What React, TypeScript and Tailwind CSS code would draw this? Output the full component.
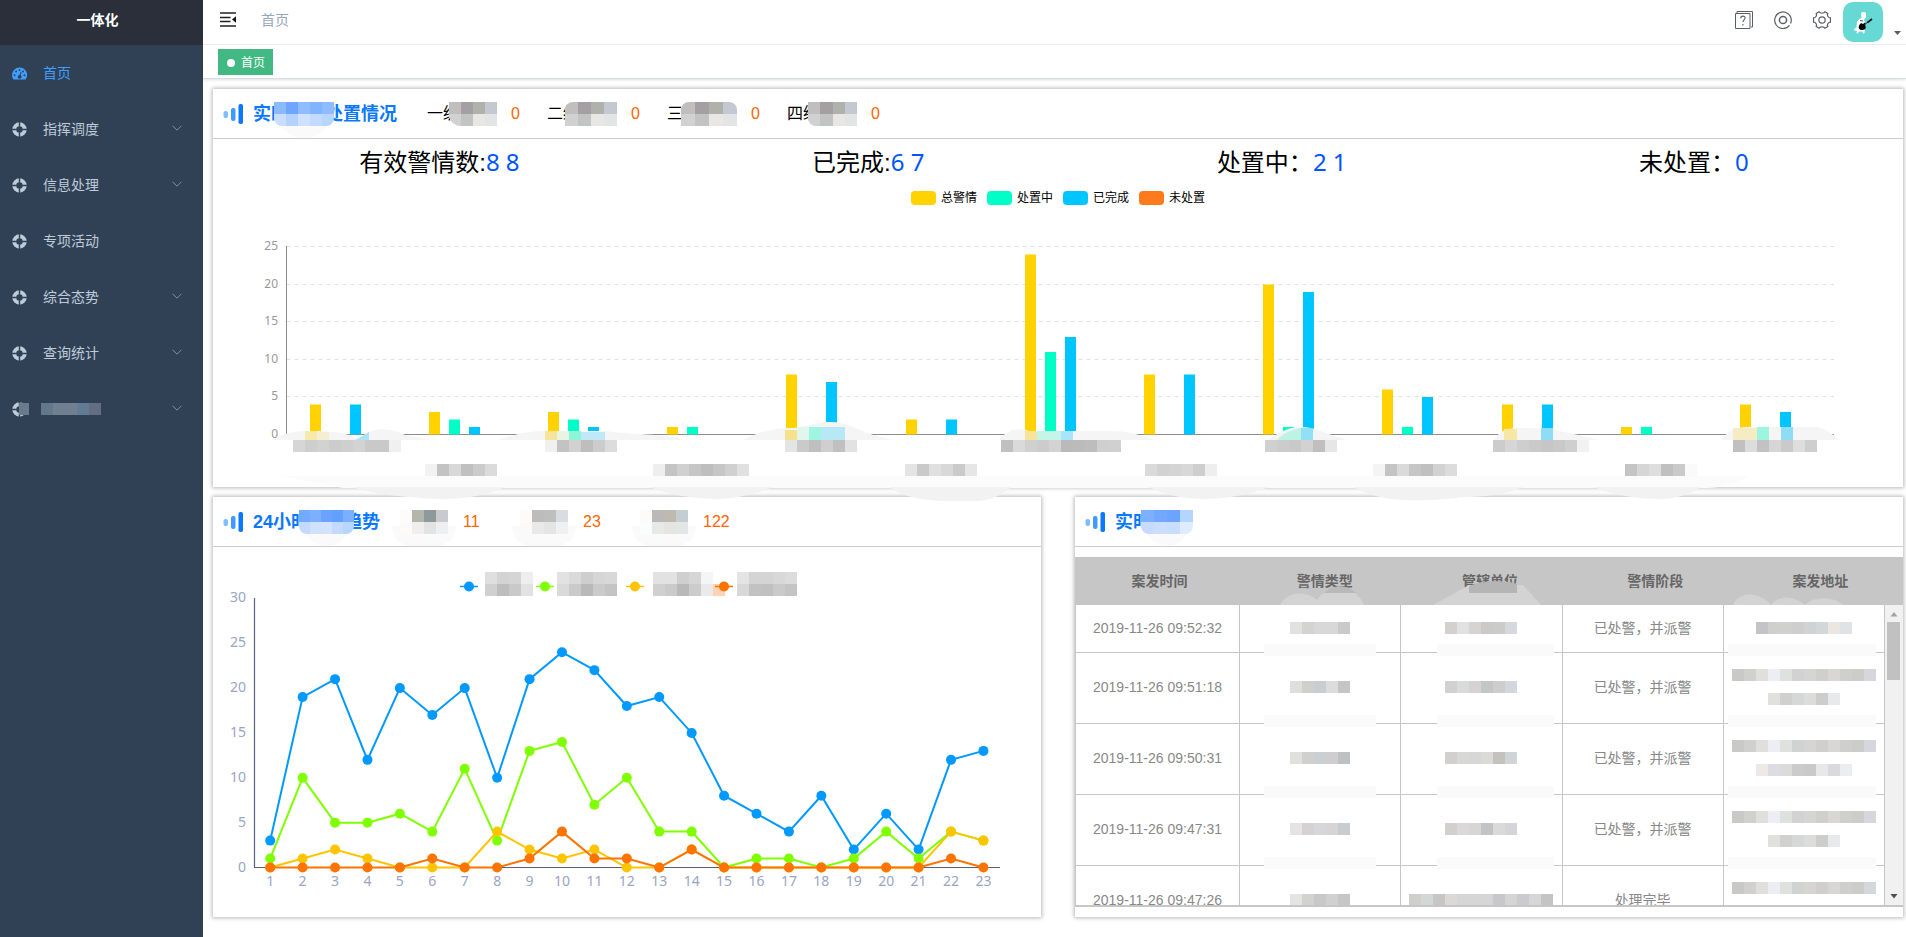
import clsx from 'clsx';

interface MenuItem {
  label?: string;
  icon: 'dashboard' | 'ring';
  active?: boolean;
  expandable?: boolean;
}

interface IncidentRow {
  time: string;
  stage: string;
  type: string[][];
  unit: string[][];
  address: string[][][];
}

const menu: MenuItem[] = [
  { label: '首页', icon: 'dashboard', active: true },
  { label: '指挥调度', icon: 'ring', expandable: true },
  { label: '信息处理', icon: 'ring', expandable: true },
  { label: '专项活动', icon: 'ring' },
  { label: '综合态势', icon: 'ring', expandable: true },
  { label: '查询统计', icon: 'ring', expandable: true },
  { icon: 'ring', expandable: true },
];

const greyMask = [
  ['#c0bfbe', '#a39fa3', '#b0b1ab', '#c3c8d1'],
  ['#d0d1d0', '#c2c4c3', '#e8e7e6', '#e3e5e5'],
];

const levels = [
  { label: '一级', value: 0, mask: '-ml-[10px] rounded-bl-xl' },
  { label: '二级', value: 0, mask: '-ml-[14px] rounded-tl-lg' },
  { label: '三级', value: 0, mask: '-ml-[18px] rounded-t-lg' },
  { label: '四级', value: 0, mask: '-ml-[11px] rounded-bl-lg' },
];

const totals = [
  { label: '有效警情数:', value: '8 8' },
  { label: '已完成:', value: '6 7' },
  { label: '处置中：', value: '2 1' },
  { label: '未处置：', value: '0' },
];

const barLegend = [
  { label: '总警情', color: 'bg-[#ffd200]' },
  { label: '处置中', color: 'bg-[#00ffc6]' },
  { label: '已完成', color: 'bg-[#00c6ff]' },
  { label: '未处置', color: 'bg-[#ff7a1a]' },
];

// [total, in progress, done]
const barData = [
  [4, 0, 4],
  [3, 2, 1],
  [3, 2, 1],
  [1, 1, 0],
  [8, 1, 7],
  [2, 0, 2],
  [24, 11, 13],
  [8, 0, 8],
  [20, 1, 19],
  [6, 1, 5],
  [4, 0, 4],
  [1, 1, 0],
  [4, 1, 3],
];
const barColors = ['#ffd200', '#00ffc6', '#00c6ff'];

const barLabels = [
  { x: 80, y: 230, cells: ['#d6d6d6', '#cecece', '#d2d2d2', '#cccccc', '#cfcfcf', '#d3d3d3', '#c9c9c9', '#c9c9c9', '#f0f0f0'] },
  { x: 332, y: 230, cells: ['#f0f0f0', '#c3c3c3', '#d1d1d1', '#bebebe', '#cccccc', '#dcdcdc'] },
  { x: 572, y: 230, cells: ['#e4e4e4', '#cacaca', '#bfbfbf', '#cfcfcf', '#c0c0c0', '#e2e2e2'] },
  { x: 788, y: 230, cells: ['#c0c0c0', '#dadada', '#d0d0d0', '#cccccc', '#d3d3d3', '#bababa', '#bbbbbb', '#bdbdbd', '#cfcfcf', '#d0d0d0'] },
  { x: 1052, y: 230, cells: ['#d0d0d0', '#cccccc', '#c9c9c9', '#d2d2d2', '#bfbfbf', '#e6e6e6'] },
  { x: 1280, y: 230, cells: ['#cccccc', '#d6d6d6', '#cecece', '#cacaca', '#c6c6c6', '#c9c9c9', '#cfcfcf', '#f2f2f2'] },
  { x: 1520, y: 230, cells: ['#c0c0c0', '#dcdcdc', '#c2c2c2', '#d6d6d6', '#cacaca', '#dedede', '#cecece'] },
  { x: 212, y: 254, cells: ['#f2f2f2', '#c3c3c3', '#d8d8d8', '#c0c0c0', '#cbcbcb', '#dbdbdb'] },
  { x: 440, y: 254, cells: ['#eeeeee', '#c4c4c4', '#d0d0d0', '#c6c6c6', '#bebebe', '#c6c6c6', '#d0d0d0', '#e0e0e0'] },
  { x: 692, y: 254, cells: ['#e4e4e4', '#cacaca', '#e0e0e0', '#d8d8d8', '#cacaca', '#e6e6e6'] },
  { x: 932, y: 254, cells: ['#dadada', '#d2d2d2', '#d4d4d4', '#d8d8d8', '#cecece', '#eeeeee'] },
  { x: 1160, y: 254, cells: ['#f4f4f4', '#c4c4c4', '#dadada', '#c6c6c6', '#c0c0c0', '#d2d2d2', '#dcdcdc'] },
  { x: 1412, y: 254, cells: ['#c4c4c4', '#d6d6d6', '#dedede', '#c0c0c0', '#cacaca', '#fafafa'] },
];

const lineSeries = [
  { color: '#0099ff', values: [3, 19, 21, 12, 20, 17, 20, 10, 21, 24, 22, 18, 19, 15, 8, 6, 4, 8, 2, 6, 2, 12, 13] },
  { color: '#80ff00', values: [1, 10, 5, 5, 6, 4, 11, 3, 13, 14, 7, 10, 4, 4, 0, 1, 1, 0, 1, 4, 1, 4, 3] },
  { color: '#ffc400', values: [0, 1, 2, 1, 0, 0, 0, 4, 2, 1, 2, 0, 0, 2, 0, 0, 0, 0, 0, 0, 0, 4, 3] },
  { color: '#ff7300', values: [0, 0, 0, 0, 0, 1, 0, 0, 1, 4, 1, 1, 0, 2, 0, 0, 0, 0, 0, 0, 0, 1, 0] },
];

const lineLegend = [
  {
    x: 256,
    maskX: 272,
    rows: [
      ['#dfdfdf', '#d3d3d3', '#d5d5d5', '#eeeeee'],
      ['#d0d0d0', '#bdbdbd', '#c9c9c9', '#e2e2e2'],
    ],
  },
  {
    x: 332,
    maskX: 344,
    rows: [
      ['#e2e2e2', '#dadada', '#cecece', '#d6d6d6', '#d8d8d8'],
      ['#dadada', '#cacaca', '#b9b9b9', '#cacaca', '#c4c4c4'],
    ],
  },
  {
    x: 422,
    maskX: 440,
    rows: [
      ['#e2e2e2', '#e2e2e2', '#cfcfcf', '#d6d6d6', '#f5f5f5'],
      ['#d0d0d0', '#cacaca', '#b9b9b9', '#cccccc', '#eaeaea', '#ffd3b3'],
    ],
  },
  {
    x: 511,
    maskX: 524,
    rows: [
      ['#e4e4e4', '#d4d4d4', '#d4d4d4', '#d8d8d8', '#dcdcdc'],
      ['#d8d8d8', '#c2c2c2', '#c0c0c0', '#cacaca', '#c4c4c4'],
    ],
  },
];

const trendStats = [
  { value: 11, rows: [['#fdfcfa', '#b2b6ab', '#8e9999', '#c8cad0'], ['#fcfbfa', '#f1eeee', '#e2e4e3', '#eeeff1']] },
  { value: 23, rows: [['#fdfbf8', '#bcbcba', '#bebebf', '#dbdce1'], ['#fcfaf9', '#e9e9e9', '#e4e4e4', '#eff0f2']] },
  { value: 122, rows: [['#fbfbfa', '#bab8b8', '#bfbab1', '#c4cdd1'], ['#fbfcfc', '#e7e9e9', '#e5e4e0', '#e2e6e6']] },
];

const columns = ['案发时间', '警情类型', '管辖单位', '警情阶段', '案发地址'];

const shortAddress = [['#e0e0de', '#d0d0ce', '#d4d8d7', '#dcdcda', '#cdcdcc', '#e8e9ea']];
const longAddress = [['#c9c9c8', '#d0d0cf', '#e0dfde', '#eceef4', '#dfe1df', '#d0d3d1', '#d6d5d3', '#cfcfce', '#d9d7d6', '#cfcfce', '#cccccb', '#d6d7dc']];

const incidents: IncidentRow[] = [
  {
    time: '2019-11-26 09:52:32',
    stage: '已处警，并派警',
    type: [['#e1e1e0', '#d3d3d0', '#d8d8d9', '#dad7d7', '#cacaca']],
    unit: [['#d2d1d0', '#e0e1e1', '#d5d4d3', '#cccac9', '#cbcbca', '#d6d8dd']],
    address: [[['#c3c4c7', '#cfcfce', '#d0d0ce', '#cdcecd', '#d0d3d3', '#d4d7d7', '#ebe6e2', '#dfe3e6']]],
  },
  {
    time: '2019-11-26 09:51:18',
    stage: '已处警，并派警',
    type: [['#dededd', '#cfcfce', '#cbcccf', '#dcdcdc', '#c5c5c6']],
    unit: [['#d0d1d0', '#d7dbdb', '#d5d2d1', '#c4c6c5', '#cfcdcc', '#d3d6dc']],
    address: [longAddress, shortAddress],
  },
  {
    time: '2019-11-26 09:50:31',
    stage: '已处警，并派警',
    type: [['#e0e0df', '#d0d0ce', '#cccfd2', '#cfcdcd', '#bfc0c2']],
    unit: [['#d1d0cf', '#d8d8d7', '#d7d7d7', '#dadad9', '#c5c2be', '#d0d4d7']],
    address: [longAddress, [['#eee9e7', '#dcdce2', '#dbdbdb', '#cbcbcb', '#c9c9c9', '#e7e8ea', '#dbd9db', '#ecedf0']]],
  },
  {
    time: '2019-11-26 09:47:31',
    stage: '已处警，并派警',
    type: [['#e5e4e3', '#d6d2d4', '#d6d7d9', '#d6d4d4', '#c9cccf']],
    unit: [['#d1d0cf', '#dad8d8', '#d8d5d5', '#c2c3c5', '#dcdad9', '#d5d5d9']],
    address: [longAddress, shortAddress],
  },
  {
    time: '2019-11-26 09:47:26',
    stage: '处理完毕',
    type: [['#e4e4e3', '#d2d2d1', '#c8c8c8', '#cfd1d0', '#c6c6c6']],
    unit: [['#cfcfcd', '#d3d7d6', '#c6c6c6', '#dbd8d6', '#d6d6d6', '#d6d6d5', '#d6d4d4', '#c6c8cb', '#d6d4d4', '#c9cbce', '#d6d6d6', '#c4c4c4']],
    address: [longAddress, shortAddress],
  },
];

// Pixelated block that stands over redacted text
function Mosaic({ rows, className }: { rows: string[][]; className?: string }) {
  const cols = Math.max(...rows.map((r) => r.length));
  return (
    <svg
      className={className}
      viewBox={`0 0 ${cols * 12} ${rows.length * 12}`}
      preserveAspectRatio="none"
      shapeRendering="crispEdges"
      aria-hidden="true"
    >
      {rows.map((row, r) =>
        row.map((fill, c) => <rect key={`${r}-${c}`} x={c * 12} y={r * 12} width="12" height="12" fill={fill} />)
      )}
    </svg>
  );
}

function MaskedTitle({ rows, className }: { rows: string[][]; className: string }) {
  return (
    <span className={clsx('relative block h-6 shrink-0', className)}>
      <span className="absolute inset-x-1 top-3 h-6 rounded-b-full bg-[#fafafa]" />
      <Mosaic rows={rows} className="relative h-6 w-full rounded-b-lg" />
    </span>
  );
}

function BarsIcon() {
  return (
    <svg className="h-5 w-5 shrink-0" viewBox="0 0 20 20" aria-hidden="true">
      <rect x="0.500" y="7" width="4.500" height="7" rx="2" fill="#7fbbff" />
      <rect x="8" y="4" width="4.500" height="13" rx="2" fill="#409aff" />
      <rect x="15.500" y="0" width="4.500" height="20" rx="1.800" fill="#0a78ff" />
    </svg>
  );
}

function RingIcon() {
  return (
    <svg className="h-[15px] w-[15px]" viewBox="0 0 16 16" aria-hidden="true">
      <circle cx="8" cy="8" r="5.600" fill="none" stroke="currentColor" strokeWidth="4.200" />
      <path d="M8 0v5M8 11v5M0 8h5M11 8h5" stroke="#304156" strokeWidth="1.500" />
    </svg>
  );
}

function DashboardIcon() {
  return (
    <svg className="h-[15px] w-[15px]" viewBox="0 0 16 16" aria-hidden="true">
      <path d="M8 1.600a8 8 0 0 0-8 8c0 1.600.4 3 1.200 4.300.1.300.4.400.7.400h12.200c.3 0 .6-.1.700-.4A8 8 0 0 0 8 1.600z" fill="currentColor" />
      <g fill="#304156">
        <circle cx="2.700" cy="9.800" r="1" />
        <circle cx="4.400" cy="5.900" r="1" />
        <circle cx="8" cy="4.200" r="1" />
        <circle cx="11.700" cy="5.900" r="1" />
        <circle cx="13.300" cy="9.800" r="1" />
        <path d="M9.300 6.200l.9.300-1 3.400a2 2 0 1 1-1.100-.3z" />
      </g>
    </svg>
  );
}

function Sidebar() {
  return (
    <aside className="w-[203px] shrink-0 bg-[#304156]">
      <h1 className="flex h-[45px] items-center justify-center bg-[#2b2f3a] pr-2 pb-1.5 text-sm font-bold text-white">一体化</h1>
      <nav>
        {menu.map((item, i) => (
          <a
            key={i}
            href="#"
            aria-label={item.label ?? '菜单'}
            className={clsx(
              'flex h-14 items-center pr-[21px] pl-3 text-sm',
              item.active ? 'text-[#409eff]' : 'text-[#bfcbd9]'
            )}
          >
            {item.icon === 'dashboard' ? <DashboardIcon /> : <RingIcon />}
            {item.label ? (
              <span className="ml-4">{item.label}</span>
            ) : (
              <>
                <Mosaic rows={[['#6b7b8e']]} className="-ml-2 h-3 w-2.5" />
                <Mosaic rows={[['#64788c', '#708090', '#727f92', '#647c93', '#636e83']]} className="ml-3 h-3 w-[60px]" />
              </>
            )}
            {item.expandable && (
              <svg className="mb-[3px] ml-auto h-1.5 w-2.5" viewBox="0 0 10 6" fill="none" stroke="#8290a1" aria-hidden="true">
                <path d="M.5.7L5 5.200 9.500.7" />
              </svg>
            )}
          </a>
        ))}
      </nav>
    </aside>
  );
}

function Navbar() {
  return (
    <header className="flex h-[45px] items-center border-b border-[#f0f1f2] pr-[5px] pl-[17px]">
      <button type="button" aria-label="收起菜单" className="mb-[7px]">
        <svg className="h-4 w-4" viewBox="0 0 16 16" aria-hidden="true">
          <path d="M0 2h16M0 6.500h10.500M0 10.500h10.500M0 15h16" stroke="#222" strokeWidth="1.500" />
          <path d="M16 5.300v6.400L12 8.500z" fill="#111" />
        </svg>
      </button>
      <a href="#" className="mb-1 ml-[25px] text-sm text-[#97a8be]">首页</a>
      <div className="ml-auto flex items-center">
        <div className="mb-1 flex gap-[21px] text-[#5a5e66]">
          <button type="button" aria-label="帮助">
            <svg className="h-[18px] w-[18px]" viewBox="0 0 18 18" fill="none" stroke="currentColor" aria-hidden="true">
              <path d="M.5 2.500h14.500v15H.5zM2 .5h15.500V16H16M2 .5v2" />
              <path d="M5.700 7.300c0-3 4.400-2.800 4.400-.2 0 1.800-2.200 1.900-2.200 4M7.900 13v1.500" strokeWidth="1.100" />
            </svg>
          </button>
          <button type="button" aria-label="主题">
            <svg className="h-[18px] w-[18px]" viewBox="0 0 18 18" fill="none" stroke="currentColor" strokeWidth="1.200" aria-hidden="true">
              <path d="M15.500 14.400A8.300 8.300 0 1 1 17.300 9c0 1.300-.3 2.500-.8 3.600M15.500 14.400a8.300 8.300 0 0 1-2.300 1.800" />
              <circle cx="9" cy="9" r="3.600" strokeWidth="1.500" />
            </svg>
          </button>
          <button type="button" aria-label="设置">
            <svg className="h-[18px] w-[18px]" viewBox="0 0 18 18" fill="none" stroke="currentColor" strokeWidth="1.200" aria-hidden="true">
              <path d="M6 .8C7 2.700 11 2.700 12 .8l2.800 1.600c-1 2 .6 4.600 2.700 4.500v4.200c-2.100-.1-3.700 2.500-2.700 4.500L12 17.200c-1-1.900-5-1.900-6 0l-2.800-1.600c1-2-.6-4.600-2.700-4.500V6.900c2.100.1 3.700-2.500 2.700-4.500z" />
              <circle cx="9" cy="9" r="3.200" />
            </svg>
          </button>
        </div>
        <button type="button" aria-label="用户菜单" className="ml-3 flex items-end">
          <svg className="h-10 w-10 rounded-[10px] bg-[#66d9d5]" viewBox="0 0 40 40" aria-hidden="true">
            <path d="M18 11c1-1.500 4-1.500 5 0v4.500l-2 2 1 3.500v6l-.5 4-1.500.5-.5-2h-4l-.5 2-1.500-.5.500-2-3-.5.500-2 2-1 .5-6 1.500-1.500 1.500-1.500 1.500-.5z" fill="#fff" />
            <path d="M18 21l2 1 2-1.500.5 4c1 2-1 3.500-3.500 3.500s-4-2-3-4c.3-1.500 1.500-2 2-3z" fill="#000" />
            <path d="M21 23l4-3" stroke="#123" strokeWidth="1" />
            <path d="M24.500 20.500L29 17" stroke="#111" strokeWidth="1.600" />
            <path d="M17 18.500l3 .5" stroke="#555" />
          </svg>
          <svg className="mb-[7px] ml-[11px] h-1 w-[7px]" viewBox="0 0 7 4" aria-hidden="true">
            <path d="M0 0h7L3.500 4z" fill="#5a5e66" />
          </svg>
        </button>
      </div>
    </header>
  );
}

function TagsBar() {
  return (
    <div className="flex h-[34px] items-center border-b border-[#d8dce5] pl-[15px] shadow-[0_1px_3px_0_rgba(0,0,0,0.12)]">
      <a href="#" className="flex h-[26px] items-center gap-1.5 bg-[#42b983] pt-0.5 pr-2 pl-[9px] text-xs text-white">
        <span className="h-2 w-2 rounded-full bg-white" />
        首页
      </a>
    </div>
  );
}

function BarChart() {
  const left = 73.5;
  const bottom = 224.5;
  const step = 119.2;
  const unit = 7.5;
  return (
    <svg className="block h-auto w-full overflow-visible" viewBox="0 0 1690 277" role="img" aria-label="警情处置柱状图">
      {[0, 5, 10, 15, 20, 25].map((tick) => (
        <g key={tick}>
          {tick > 0 && (
            <line
              x1={left}
              x2="1621"
              y1={Math.round(bottom - tick * unit) - 0.5}
              y2={Math.round(bottom - tick * unit) - 0.5}
              stroke="#e0e0e0"
              strokeDasharray="4 4"
            />
          )}
          <text x="65" y={bottom - tick * unit + 3} textAnchor="end" fontSize="12" fill="#999" className="font-['Noto_Sans',sans-serif]">
            {tick}
          </text>
        </g>
      ))}
      <path d={`M${left} 36V${bottom}H1621`} fill="none" stroke="#8c8c8c" />
      {barData.map((values, i) =>
        values.map((v, k) => (
          <rect
            key={`${i}-${k}`}
            x={Math.round(left + i * step + 23 + k * 20)}
            y={bottom - v * unit}
            width={v ? 11 : 0}
            height={v * unit}
            fill={barColors[k]}
          />
        ))
      )}

      {/* haze left around the blurred category names */}
      <g>
        <path d="M60 230C72 222 84 221 100 221s26 1 36 4l8 4 12-7c14-6 28-1 36 3l26 5z" fill="#f5f5f5" />
        <path d="M92 221h12v9H92z" fill="#f6e9ac" />
        <path d="M104 222h12v8h-12z" fill="#f5eed2" />
        <path d="M144 229l12-7v8h-14z" fill="#a9e3f6" />
        <path d="M284 230c20-6 30-9 50-9h60c20 4 60 2 78 9z" fill="#f5f5f5" />
        <path d="M332 221h12v9h-12z" fill="#f6e49a" />
        <path d="M344 221h12v9h-12z" fill="#e8f5e2" />
        <path d="M356 221h12v9h-12z" fill="#8ff5d8" />
        <path d="M368 222h24v8h-24z" fill="#bfe9f6" />
        <path d="M530 230c18-9 32-12 48-12s20-6 40-6 30 12 62 18z" fill="#f5f5f5" />
        <path d="M572 220h12v10h-12z" fill="#f6e28a" />
        <path d="M584 217h12v13h-12z" fill="#e0f6ee" />
        <path d="M596 217h12v13h-12z" fill="#9ff5e0" />
        <path d="M608 217h24v13h-24z" fill="#b8e7f6" />
        <path d="M786 230c8-10 18-13 30-9h84c20 0 30 6 44 9z" fill="#f5f5f5" />
        <path d="M812 221h12v9h-12z" fill="#f6e49a" />
        <path d="M824 221h24v9h-24z" fill="#c4f5e8" />
        <path d="M848 221h12v9h-12z" fill="#a9e5f8" />
        <path d="M1052 232c14-10 24-15 36-15 14 0 28 8 46 13z" fill="#f3f5f5" />
        <path d="M1064 230c6-6 12-10 24-12v12z" fill="#bdf3e4" />
        <path d="M1088 218h12v12h-12z" fill="#92e0f6" />
        <path d="M1280 232c6-12 14-14 30-14 22 0 36 2 76 12z" fill="#f5f5f5" />
        <path d="M1291 219h13v11h-13z" fill="#f5e8a6" />
        <path d="M1328 218h12v12h-12z" fill="#8fdcf6" />
        <path d="M1509 230c6-10 12-12 24-13h72c8 2 14 6 20 13z" fill="#f5f5f5" />
        <path d="M1520 218h24v12h-24z" fill="#f6ecc4" />
        <path d="M1544 217h12v13h-12z" fill="#9cf5e0" />
        <path d="M1568 217h12v13h-12z" fill="#8fdcf6" />
      </g>
      {barLabels.map((l) =>
        l.cells.map((fill, c) => (
          <rect key={`${l.x}-${c}`} x={l.x + c * 12} y={l.y} width="12" height="12" fill={fill} shapeRendering="crispEdges" />
        ))
      )}
      <path d="M68 266h1470c-20 8-30 12-44 12H130c-20-4-40-8-62-12z" fill="#fbfbfb" />
      <path
        d="M140 277h152c-16 8-40 12-60 12s-74-4-92-12zM436 277h124c-20 8-40 12-54 12-24 0-50-4-70-12zM676 277h122c-10 8-20 14-34 14-30 0-66 2-88-14zM936 277h120c-20 8-44 12-64 12-22 0-40-4-56-12zM1140 277h170c-20 8-40 10-60 10-30 4-80 8-110-10zM1380 277h108c-14 8-26 12-40 12-24 0-48-4-68-12z"
        fill="#f2f2f2"
      />
    </svg>
  );
}

function LineChart() {
  const x = (i: number) => 57.2 + i * 32.42;
  const y = (v: number) => 320.5 - v * 8.97;
  return (
    <svg className="block h-auto w-full" viewBox="0 0 828 370" role="img" aria-label="24小时趋势折线图">
      <path d="M41.5 51V320.5H787" fill="none" stroke="#57617b" strokeWidth="1.200" />
      {[0, 5, 10, 15, 20, 25, 30].map((tick) => (
        <text key={tick} x="33" y={y(tick) + 4} textAnchor="end" fontSize="14" fill="#9aa5c4" className="font-['Noto_Sans',sans-serif]">
          {tick}
        </text>
      ))}
      {lineSeries[0].values.map((_, i) => (
        <text key={i} x={x(i)} y="339" textAnchor="middle" fontSize="14" fill="#9aa5c4" className="font-['Noto_Sans',sans-serif]">
          {i + 1}
        </text>
      ))}
      {lineSeries.map((s) => (
        <g key={s.color} fill={s.color}>
          <polyline points={s.values.map((v, i) => `${x(i)},${y(v)}`).join(' ')} fill="none" stroke={s.color} strokeWidth="2" />
          {s.values.map((v, i) => (
            <circle key={i} cx={x(i)} cy={y(v)} r="5" />
          ))}
        </g>
      ))}
      {lineLegend.map((l, n) => (
        <g key={l.x}>
          <line x1={l.x - 9} x2={l.x + 9} y1="39.5" y2="39.5" stroke={lineSeries[n].color} strokeWidth="1.500" />
          <circle cx={l.x} cy="39.5" r="5" fill={lineSeries[n].color} />
          {l.rows.map((row, r) =>
            row.map((fill, c) => (
              <rect key={`${r}-${c}`} x={l.maskX + c * 12} y={25 + r * 12} width="12" height="12" fill={fill} shapeRendering="crispEdges" />
            ))
          )}
        </g>
      ))}
    </svg>
  );
}

function Haze({ className }: { className: string }) {
  return <span className={clsx('absolute -bottom-1 h-3 bg-[#fafafa]', className)} />;
}

function IncidentTable() {
  return (
    <div className="mt-2.5">
      <div className="relative bg-[#c6c6c6] pl-0.5">
        <table className="w-full table-fixed text-center text-sm text-[#666]">
          <thead>
            <tr className="h-12">
              {columns.map((c) => (
                <th key={c} scope="col" className="p-0 font-bold">{c}</th>
              ))}
            </tr>
          </thead>
        </table>
        <svg className="absolute inset-x-0 bottom-0 h-6 w-full" viewBox="0 0 828 24" preserveAspectRatio="none" aria-hidden="true">
          <path d="M205 24c6-12 24-16 37-5 8-14 38-18 47 5z" fill="#d3d3d3" />
          <path d="M249 12c10-10 24-8 32 0z" fill="#b9b9b9" />
          <path d="M358 24l36-20h54l18 20z" fill="#d3d3d3" />
          <path d="M394 12V5c12-6 38-6 48-2v9z" fill="#b5b5b5" />
          <path d="M658 24c6-14 26-14 38 0 8-10 22-10 34 0 10-10 30-8 38 0z" fill="#d3d3d3" />
        </svg>
      </div>
      <div className="flex h-[302px] overflow-hidden border-b-2 border-l border-[#c6c6c6]">
        <div className="min-w-0 flex-1 overflow-hidden">
          <table className="w-full table-fixed border-separate border-spacing-0 text-center text-sm text-[#888]">
            <colgroup>
              <col className="w-[164px]" />
              <col />
              <col />
              <col />
              <col />
            </colgroup>
            <tbody>
              {incidents.map((row, i) => (
                <tr
                  key={row.time}
                  className={clsx(
                    '[&>td]:border-r [&>td]:border-b [&>td]:border-[#c6c6c6] [&>td]:pb-0.5',
                    i === 0 ? 'h-12' : 'h-[71px]'
                  )}
                >
                  <td>{row.time}</td>
                  <td className="relative">
                    <Haze className="inset-x-6" />
                    <Mosaic rows={row.type} className="mx-auto h-3 w-[60px]" />
                  </td>
                  <td className="relative">
                    <Haze className="right-2 left-9" />
                    <Mosaic rows={row.unit} className={clsx('mx-auto h-3', row.unit[0].length > 6 ? 'w-36' : 'w-[72px]')} />
                  </td>
                  <td>{row.stage}</td>
                  <td className="relative">
                    <Haze className="right-2 left-1" />
                    <div className="relative flex flex-col items-center gap-3">
                      {row.address.map((line, n) => (
                        <Mosaic
                          key={n}
                          rows={line}
                          className={clsx('h-3', line[0].length > 8 ? 'w-36' : line[0].length > 6 ? 'w-24' : 'w-[72px]')}
                        />
                      ))}
                    </div>
                  </td>
                </tr>
              ))}
            </tbody>
          </table>
        </div>
        <div className="flex w-[18px] flex-col items-center bg-[#f1f1f1] pr-px pb-1.5">
          <svg className="mt-1.5 h-1.5 w-2" viewBox="0 0 8 6" aria-hidden="true">
            <path d="M4 1l3.500 4.500h-7z" fill="#a3a3a3" />
          </svg>
          <div className="mt-[5px] h-[58px] w-[13px] bg-[#c1c1c1]" />
          <svg className="mt-auto h-1.5 w-2" viewBox="0 0 8 6" aria-hidden="true">
            <path d="M.5 1h7L4 5.500z" fill="#505050" />
          </svg>
        </div>
      </div>
    </div>
  );
}

const cardClass = 'bg-white shadow-[0_0_4px_1px_rgba(0,0,0,0.28)]';
const cardHeader = 'flex h-[50px] items-center border-b border-[#ccc] pl-2.5';
const titleClass = 'ml-2.5 flex items-center text-lg font-bold text-[#0a78ff] whitespace-nowrap';

export default function App() {
  return (
    <div className="flex min-h-screen bg-white font-['Liberation_Sans','Noto_Sans_CJK_SC',sans-serif] text-black">
      <Sidebar />
      <div className="min-w-0 flex-1">
        <Navbar />
        <TagsBar />
        <main className="flex flex-col gap-2.5 pt-2.5 pr-[3px] pb-5 pl-2.5">
          <section className={clsx(cardClass, 'relative z-10')}>
            <div className={cardHeader}>
              <BarsIcon />
              <h2 className={titleClass}>
                实时
                <MaskedTitle
                  className="-mr-[9px] -ml-[15px] w-[60px]"
                  rows={[
                    ['#8abaff', '#6ea6ff', '#8fbcff', '#82b3ff', '#8fbcff'],
                    ['#c9deff', '#b5d1ff', '#cfe1ff', '#c3daff', '#b7d6ff'],
                  ]}
                />
                处置情况
              </h2>
              <div className="ml-[30px] flex text-base">
                {levels.map((l) => (
                  <div key={l.label} className="flex w-[120px] items-center">
                    <div className="flex w-[70px] items-center">
                      <span className="w-8 shrink-0">{l.label}</span>
                      <span className={clsx('relative block h-6 flex-1 overflow-hidden bg-[#fafafa]', l.mask)}>
                        <Mosaic rows={greyMask} className="h-6 w-full" />
                      </span>
                    </div>
                    <span className="ml-3.5 text-[#ff6600]">{l.value}</span>
                  </div>
                ))}
              </div>
            </div>
            <div className="flex h-[46px] items-center justify-around pr-2 text-2xl">
              {totals.map((t) => (
                <p key={t.label}>
                  {t.label}
                  <span className="font-['Noto_Sans',sans-serif] text-[#0055ff]">{t.value}</span>
                </p>
              ))}
            </div>
            <ul className="flex h-[25px] items-center justify-center gap-2.5 text-xs">
              {barLegend.map((l) => (
                <li key={l.label} className="flex items-center gap-[5px]">
                  <span className={clsx('h-3.5 w-[25px] rounded', l.color)} />
                  {l.label}
                </li>
              ))}
            </ul>
            <BarChart />
          </section>

          <div className="grid grid-cols-2 gap-[34px]">
            <section className={cardClass}>
              <div className={cardHeader}>
                <BarsIcon />
                <h2 className={titleClass}>
                  24小时
                  <MaskedTitle
                    className="-mr-2.5 -ml-2.5 w-[55px]"
                    rows={[
                      ['#73a9ff', '#7dafff', '#6aa3ff', '#62a0ff', '#7bafff'],
                      ['#c3d9ff', '#d0e1ff', '#d3e3ff', '#c3d9ff', '#b8d5ff'],
                    ]}
                  />
                  趋势
                </h2>
                <div className="ml-5 flex text-base">
                  {trendStats.map((s) => (
                    <div key={s.value} className="flex w-[120px] items-center">
                      <span className="relative block">
                        <span className="absolute -inset-x-2 top-4 h-5 rounded-b-full bg-[#fafafa]" />
                        <Mosaic rows={s.rows} className="relative h-6 w-12" />
                      </span>
                      <span className="ml-[15px] text-[#ff6600]">{s.value}</span>
                    </div>
                  ))}
                </div>
              </div>
              <LineChart />
            </section>

            <section className={cardClass}>
              <div className={cardHeader}>
                <BarsIcon />
                <h2 className={titleClass}>
                  实时
                  <MaskedTitle
                    className="-ml-2.5 w-[52px]"
                    rows={[
                      ['#7db1ff', '#72a8ff', '#6ba5ff', '#b3d5ff'],
                      ['#c6dbff', '#cadeff', '#c9deff', '#dfecff'],
                    ]}
                  />
                </h2>
              </div>
              <IncidentTable />
            </section>
          </div>
        </main>
      </div>
    </div>
  );
}
